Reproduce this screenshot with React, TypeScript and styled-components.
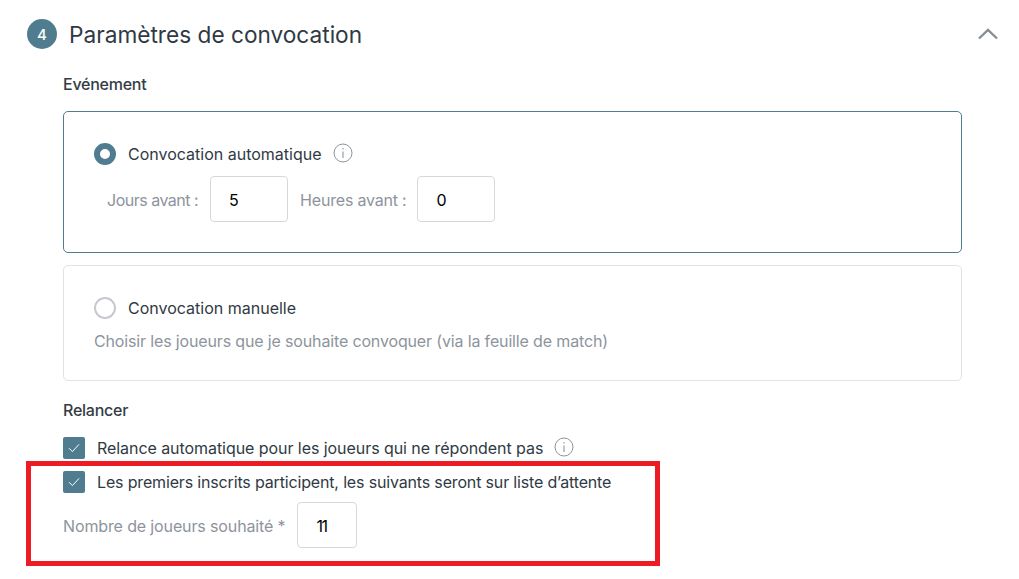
import React from 'react';
import styled, {createGlobalStyle} from 'styled-components';

const Global = createGlobalStyle`
  html, body {
    margin: 0;
    padding: 0;
    background: #fff;
    overflow: hidden;
  }
  * {
    box-sizing: border-box;
  }
`;

const Page = styled.div`
  position: relative;
  width: 1019px;
  height: 579px;
  padding: 19px 21px 0 27px;
  font-family: Inter, "Liberation Sans", sans-serif;
  color: #2f3a44;
  overflow: hidden;
`;

const Header = styled.div`
  display: flex;
  align-items: center;
  height: 30px;
  gap: 12px;
`;

const StepBadge = styled.div`
  width: 30px;
  height: 30px;
  border-radius: 50%;
  background: #4f7d8f;
  color: #fff;
  font-size: 15px;
  font-weight: 500;
  display: flex;
  align-items: center;
  justify-content: center;
`;

const Title = styled.h2`
  flex: 1;
  margin: 0;
  font-size: 22.65px;
  font-weight: 400;
  color: #2f3a44;
`;

const Body = styled.div`
  margin-left: 36px;
  width: 899px;
`;

const SectionLabel = styled.div<{ $top: number; $bottom: number }>`
  margin-top: ${p => p.$top}px;
  margin-bottom: ${p => p.$bottom}px;
  font-size: 16px;
  line-height: 20px;
  font-weight: 500;
  letter-spacing: -0.25px;
  color: #333d46;
`;

const Card = styled.div<{ $active?: boolean; $height: number; $top?: number }>`
  height: ${p => p.$height}px;
  margin-top: ${p => p.$top ?? 0}px;
  border: 1px solid ${p => (p.$active ? '#4f7d8f' : '#dfe3e7')};
  border-radius: 5px;
  padding: 31px 0 0 30px;
`;

const RadioRow = styled.div`
  display: flex;
  align-items: center;
  height: 22px;
  gap: 12px;
`;

const Radio = styled.span<{ $checked?: boolean }>`
  width: 22px;
  height: 22px;
  flex: none;
  border-radius: 50%;
  background: #fff;
  border: ${p => (p.$checked ? '6px solid #4f7d8f' : '2px solid #c6cad0')};
`;

const OptionText = styled.span`
  font-size: 16px;
  color: #2f3a44;
`;

const InfoIcon = styled.svg`
  width: 20px;
  height: 20px;
  flex: none;
  margin: -2px 0 0 -1px;
  color: #8d949c;
`;

const FieldRow = styled.div<{ $top: number }>`
  display: flex;
  align-items: center;
  margin-top: ${p => p.$top}px;
`;

const FieldLabel = styled.span<{ $left?: number; $right: number; $spacing: number }>`
  margin-left: ${p => p.$left ?? 0}px;
  margin-right: ${p => p.$right}px;
  padding-top: 2px;
  font-size: 16px;
  letter-spacing: ${p => p.$spacing}px;
  color: #8d949c;
`;

const NumberBox = styled.div<{ $width: number; $spacing?: number }>`
  width: ${p => p.$width}px;
  height: 46px;
  border: 1px solid #d5d9dd;
  border-radius: 4px;
  padding: 2px 0 0 18px;
  display: flex;
  align-items: center;
  font-size: 16px;
  letter-spacing: ${p => p.$spacing ?? 0}px;
  color: #000;
`;

const Hint = styled.div`
  margin-top: 12px;
  font-size: 16px;
  letter-spacing: -0.15px;
  color: #8d949c;
`;

const CheckRow = styled.div<{ $top?: number }>`
  display: flex;
  align-items: center;
  height: 22px;
  margin-top: ${p => p.$top ?? 0}px;
  gap: 12px;
`;

const CheckBox = styled.span`
  width: 22px;
  height: 22px;
  flex: none;
  border-radius: 2px;
  background: #4f7d8f;
  display: flex;
  align-items: center;
  justify-content: center;
`;

const CheckText = styled.span<{ $spacing: number }>`
  font-size: 16px;
  letter-spacing: ${p => p.$spacing}px;
  color: #2f3a44;
`;

const Annotation = styled.div`
  position: absolute;
  left: 26px;
  top: 461px;
  width: 634px;
  height: 105px;
  border: 5px solid #ed1c24;
  pointer-events: none;
`;

const Info = () => (
    <InfoIcon viewBox="0 0 20 20" fill="none" stroke="currentColor">
        <circle cx="10" cy="10" r="9" strokeWidth="1"/>
        <line x1="10" y1="8.5" x2="10" y2="15" strokeWidth="1.1"/>
        <line x1="10" y1="5" x2="10" y2="6.5" strokeWidth="1.1"/>
    </InfoIcon>
);

const Tick = () => (
    <svg width="12" height="10" viewBox="0 0 12 10" fill="none" stroke="#fff" strokeWidth="1">
        <path d="M1 5.2 L4.4 8.6 L11 1.4"/>
    </svg>
);

export default function App() {
    return (
        <Page>
            <Global/>
            <Header>
                <StepBadge>4</StepBadge>
                <Title>Paramètres de convocation</Title>
                <svg width="20" height="12" viewBox="0 0 20 12" fill="none" stroke="#868e96" strokeWidth="2.4">
                    <path d="M1 10.5 L10 2 L19 10.5"/>
                </svg>
            </Header>
            <Body>
                <SectionLabel $top={25} $bottom={17}>Evénement</SectionLabel>
                <Card $active $height={142}>
                    <RadioRow>
                        <Radio $checked/>
                        <OptionText>Convocation automatique</OptionText>
                        <Info/>
                    </RadioRow>
                    <FieldRow $top={11}>
                        <FieldLabel $left={13} $right={12} $spacing={-0.5}>Jours avant :</FieldLabel>
                        <NumberBox $width={78}>5</NumberBox>
                        <FieldLabel $left={12} $right={11} $spacing={-0.2}>Heures avant :</FieldLabel>
                        <NumberBox $width={78}>0</NumberBox>
                    </FieldRow>
                </Card>
                <Card $height={116} $top={12}>
                    <RadioRow>
                        <Radio/>
                        <OptionText>Convocation manuelle</OptionText>
                    </RadioRow>
                    <Hint>Choisir les joueurs que je souhaite convoquer (via la feuille de match)</Hint>
                </Card>
                <SectionLabel $top={19} $bottom={17}>Relancer</SectionLabel>
                <CheckRow>
                    <CheckBox><Tick/></CheckBox>
                    <CheckText $spacing={-0.06}>Relance automatique pour les joueurs qui ne répondent pas</CheckText>
                    <Info/>
                </CheckRow>
                <CheckRow $top={12}>
                    <CheckBox><Tick/></CheckBox>
                    <CheckText $spacing={-0.16}>Les premiers inscrits participent, les suivants seront sur liste d’attente</CheckText>
                </CheckRow>
                <FieldRow $top={9}>
                    <FieldLabel $right={12} $spacing={-0.13}>Nombre de joueurs souhaité *</FieldLabel>
                    <NumberBox $width={60} $spacing={-1.5}>11</NumberBox>
                </FieldRow>
            </Body>
            <Annotation/>
        </Page>
    );
}
